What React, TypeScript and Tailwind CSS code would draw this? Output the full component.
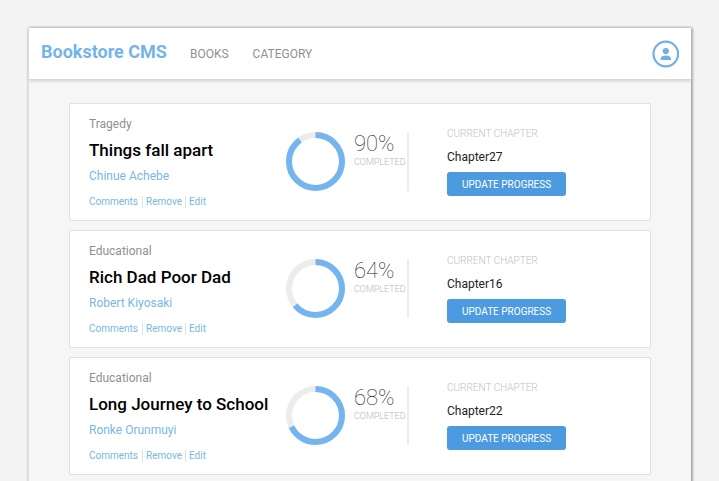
import React from 'react';

type Book = {
  category: string;
  title: string;
  author: string;
  percent: number;
  chapter: string;
};

const books: Book[] = [
  { category: 'Tragedy', title: 'Things fall apart', author: 'Chinue Achebe', percent: 90, chapter: 'Chapter27' },
  { category: 'Educational', title: 'Rich Dad Poor Dad', author: 'Robert Kiyosaki', percent: 64, chapter: 'Chapter16' },
  { category: 'Educational', title: 'Long Journey to School', author: 'Ronke Orunmuyi', percent: 68, chapter: 'Chapter22' },
];

function Ring({ percent }: { percent: number }) {
  return (
    <svg viewBox="0 0 59 59" className="size-[59px] shrink-0" fill="none" strokeWidth="6" aria-hidden="true">
      <circle cx="29.5" cy="29.5" r="26.5" stroke="#ececec" />
      <circle
        cx="29.5"
        cy="29.5"
        r="26.5"
        stroke="#74b4ef"
        pathLength={100}
        strokeDasharray={`${percent} 100`}
        transform="rotate(-90 29.5 29.5)"
      />
    </svg>
  );
}

function BookCard({ book }: { book: Book }) {
  return (
    <li className="flex items-start rounded-xs border border-[#e0e0e0] bg-white px-[19px] py-3">
      <div className="w-[197px] shrink-0">
        <p className="text-xs leading-4 text-[#909090]">{book.category}</p>
        <h2 className="mt-2 text-[17px] leading-5 font-medium text-black">{book.title}</h2>
        <p className="mt-2 text-xs leading-4 text-[#78b8e2]">{book.author}</p>
        <div className="mt-3 flex h-3 divide-x divide-[#e0e0e0] text-[10px] text-[#78b8e2]">
          <button type="button" className="pr-1 leading-3">Comments</button>
          <button type="button" className="px-[3px] leading-3">Remove</button>
          <button type="button" className="pl-[3px] leading-3">Edit</button>
        </div>
      </div>
      <div className="mt-4 flex shrink-0 border-r-2 border-[#ececec]">
        <Ring percent={book.percent} />
        <div className="ml-[9px] w-[53px]">
          <p className="text-[22px] leading-6 font-thin text-[#222]">{book.percent}%</p>
          <p className="text-[9px] leading-3 font-light text-[#b8b8b8]">COMPLETED</p>
        </div>
      </div>
      <div className="mt-[10px] ml-[38px]">
        <p className="text-[10px] leading-4 font-light text-[#c0c0c0]">CURRENT CHAPTER</p>
        <p className="mt-[7px] text-xs leading-4 text-[#222]">{book.chapter}</p>
        <button type="button" className="mt-[7px] h-6 rounded-[3px] bg-[#4c9ae0] px-[15px] text-[10px] text-white">
          UPDATE PROGRESS
        </button>
      </div>
    </li>
  );
}

export default function App() {
  return (
    <div className="h-screen overflow-hidden bg-[#f4f4f4] px-7 pt-7 font-[Roboto,sans-serif]">
      <div className="min-h-screen border-l border-[#e0e0e0] bg-[#f6f6f6] shadow-[1px_0_3px_#777]">
        <header className="flex h-[52px] items-center border-b border-[#d8d8d8] bg-white px-3 shadow-[0_1px_3px_#ccc]">
          <h1 className="pb-1 text-lg leading-6 font-bold text-[#74b4ea]">Bookstore CMS</h1>
          <nav className="ml-[23px] flex gap-6 text-xs text-[#909090]">
            <a href="#books">BOOKS</a>
            <a href="#category">CATEGORY</a>
          </nav>
          <button type="button" aria-label="Account" className="ml-auto">
            <svg viewBox="0 0 28 28" className="size-7" fill="#70b0e8" aria-hidden="true">
              <circle cx="14.8" cy="14" r="12.3" fill="none" stroke="#70b0e8" strokeWidth="2.2" />
              <circle cx="14.8" cy="11" r="3.1" />
              <path d="M9.6 20v-1.2C9.6 16.6 11.8 15.6 14.8 15.6s5.2 1 5.2 3.2V20Z" />
            </svg>
          </button>
        </header>
        <main>
          <ul className="flex flex-col gap-[9px] px-10 pt-[23px]">
            {books.map((book) => (
              <BookCard key={book.title} book={book} />
            ))}
          </ul>
        </main>
      </div>
    </div>
  );
}
